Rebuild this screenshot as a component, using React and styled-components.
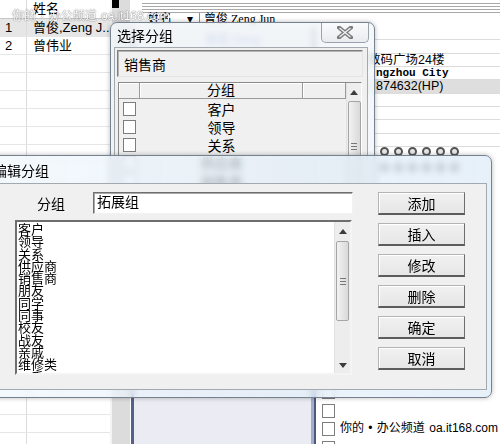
import React from 'react';
import styled, { createGlobalStyle } from 'styled-components';

const GlobalStyle = createGlobalStyle`
    html, body {
        margin: 0;
        padding: 0;
        background: #fff;
    }
    body {
        font-family: "Liberation Sans", "Noto Sans CJK SC", sans-serif;
        font-size: 13px;
        color: #000;
    }
`;

const Desktop = styled.div`
    position: relative;
    width: 500px;
    height: 444px;
    overflow: hidden;
    background: #fff;
`;

/* ---------- background application ---------- */

const BackApp = styled.div`
    display: flex;
    height: 100%;
`;

const Sheet = styled.div`
    width: 110px;
    flex: none;
    display: flex;
    flex-direction: column;
    overflow: hidden;
`;

const SheetRow = styled.div`
    display: flex;
    flex: none;
    height: ${p => (p.$head ? 19 : 18)}px;
    box-sizing: border-box;
    border-bottom: 1px solid ${p => (p.$head ? '#c6c6c6' : '#e6e6e6')};
    background: ${p => (p.$selected ? '#e6e6e6' : '#fff')};
    font-size: 13px;
    line-height: 17px;
`;

const NumCell = styled.div`
    width: 27px;
    flex: none;
    box-sizing: border-box;
    padding-left: 5px;
    border-right: 1px solid #dcdcdc;
`;

const NameCell = styled.div`
    flex: 1;
    padding-left: 6px;
    white-space: nowrap;
    overflow: hidden;
`;

const Gutter = styled.div`
    width: 20px;
    flex: none;
    box-sizing: border-box;
    border-left: 2px solid #f4f4f4;
    background: #dcdcdc;
`;

const BlackTab = styled.div`
    width: 7px;
    height: 8px;
    background: #000;
`;

const Main = styled.div`
    flex: 1;
    display: flex;
    flex-direction: column;
    min-width: 0;
`;

const Stripes = styled.div`
    height: 13px;
    flex: none;
    margin-left: 12px;
    background: repeating-linear-gradient(
        to bottom,
        transparent 0 2px,
        #a8a8a8 2px 3px
    );
    background-size: 100% 12px;
    background-repeat: no-repeat;
    background-position: 0 1px;
`;

const FieldHeader = styled.div`
    height: 14px;
    flex: none;
    display: flex;
    align-items: flex-start;
    font-size: 12px;
    line-height: 12px;
    white-space: nowrap;
`;

const FieldLabel = styled.div`
    width: 70px;
    box-sizing: border-box;
    padding-left: 18px;
    display: flex;
    justify-content: space-between;
    padding-right: 6px;
    border-right: 1px solid #8a8a8a;
`;

const FieldValue = styled.div`
    padding-left: 4px;
    font-family: "Liberation Serif", "Noto Sans CJK SC", serif;
`;

const MainBody = styled.div`
    flex: 1;
    display: flex;
    min-height: 0;
`;

const Panel = styled.div`
    width: 185px;
    flex: none;
    margin-left: 1px;
    box-sizing: border-box;
    border-left: 3px solid #53628a;
    border-right: 2px solid #4d5a80;
    box-shadow: inset -3px 0 0 #a6acca;
    background: #ebebf3;
    padding: 3px 0 0 71px;
    color: #3d68c4;
    font-size: 12px;
`;

const CheckCol = styled.div`
    width: 24px;
    flex: none;
    padding-top: 355px;
`;

const CheckRow = styled.div`
    height: 18.7px;
    padding: 3px 0 0 6px;
    box-sizing: border-box;
`;

const Box = styled.div`
    width: 13px;
    height: 14px;
    box-sizing: border-box;
    border: 1px solid #7d7d7d;
    background: #fff;
`;

const Cards = styled.div`
    flex: 1;
    display: flex;
    flex-direction: column;
    overflow: hidden;
`;

const CardRow = styled.div`
    height: 13.35px;
    flex: none;
    box-sizing: border-box;
    border-bottom: 1px solid #dcdcdc;
    padding-left: ${p => p.$indent || 28}px;
    background: ${p => (p.$hl ? '#dedede' : '#fff')};
    font-family: ${p => (p.$mono ? '"Liberation Mono", monospace' : 'inherit')};
    font-weight: ${p => (p.$mono ? 'bold' : 'normal')};
    font-size: ${p => (p.$mono ? 11 : 12.5)}px;
    line-height: 13px;
    white-space: nowrap;
`;

const DotRow = styled.div`
    height: 16px;
    flex: none;
    display: flex;
    gap: 5px;
    padding: 0 0 0 40px;
`;

const Dot = styled.div`
    width: 9px;
    height: 9px;
    box-sizing: border-box;
    border-radius: 50%;
    border: 2px solid #555;
    background: #e8e8e8;
`;

const Watermark = styled.div`
    position: absolute;
    left: ${p => p.$x}px;
    top: ${p => p.$y}px;
    font-size: 12px;
    white-space: nowrap;
    color: ${p => (p.$light ? '#fff' : '#000')};
    text-shadow: ${p =>
        p.$light ? '0 0 1px rgba(0,0,0,0.6), 0 0 2px rgba(0,0,0,0.3)' : 'none'};
    word-spacing: 1px;
    z-index: 5;
`;

/* ---------- window chrome ---------- */

const Window = styled.div`
    position: absolute;
    left: ${p => p.$x}px;
    top: ${p => p.$y}px;
    width: ${p => p.$w}px;
    height: ${p => p.$h}px;
    box-sizing: border-box;
    display: flex;
    flex-direction: column;
    border: 1px solid #76828f;
    border-radius: ${p => (p.$round ? '7px' : '7px 7px 0 0')};
    background: ${p => p.$glass};
    backdrop-filter: blur(3px);
    box-shadow: 0 0 5px rgba(0, 0, 0, 0.28);
    z-index: ${p => p.$z};
`;

const TitleBar = styled.div`
    height: ${p => p.$h}px;
    flex: none;
    display: flex;
    align-items: center;
    justify-content: space-between;
    padding-left: ${p => p.$pad}px;
    font-size: 14px;
    white-space: nowrap;
`;

const CloseButton = styled.div`
    align-self: flex-start;
    width: 48px;
    height: 20px;
    margin-right: 5px;
    box-sizing: border-box;
    border: 1px solid #9aa3ab;
    border-top: none;
    border-radius: 0 0 5px 5px;
    background: linear-gradient(#fafbfc, #e9ecef);
    display: flex;
    align-items: center;
    justify-content: center;
`;

const Client = styled.div`
    flex: 1;
    min-height: 0;
    margin: ${p => p.$m};
    box-sizing: border-box;
    border: 1px solid #a3a9b0;
    background: #f0f0f0;
    padding: ${p => p.$p};
    display: flex;
    flex-direction: ${p => (p.$row ? 'row' : 'column')};
`;

/* ---------- choose-group dialog ---------- */

const GrayInput = styled.div`
    height: 27px;
    flex: none;
    box-sizing: border-box;
    border: 1px solid;
    border-color: #7e7e7e #e4e4e4 #e4e4e4 #7e7e7e;
    box-shadow: inset 1px 1px 0 #b4b4b4;
    display: flex;
    align-items: center;
    padding-left: 6px;
    font-size: 14px;
`;

const Grid = styled.div`
    margin: 5px 1px 0 1px;
    flex: 1;
    display: flex;
    box-sizing: border-box;
    border: 1px solid;
    border-color: #8a8a8a #fff #fff #8a8a8a;
    overflow: hidden;
`;

const GridMain = styled.div`
    flex: 1;
    display: flex;
    flex-direction: column;
`;

const GridHead = styled.div`
    display: flex;
    height: 16px;
    flex: none;
`;

const HeadCell = styled.div`
    width: ${p => (p.$w ? `${p.$w}px` : 'auto')};
    flex: ${p => (p.$w ? 'none' : 1)};
    box-sizing: border-box;
    border-right: 1px solid #9a9a9a;
    border-bottom: 1px solid #9a9a9a;
    box-shadow: inset 1px 1px 0 #fff;
    text-align: center;
    font-size: 14px;
    line-height: 15px;
`;

const GridRow = styled.div`
    display: flex;
    height: 18px;
    flex: none;
    align-items: center;
    margin-top: ${p => (p.$first ? 1 : 0)}px;
`;

const ChkCell = styled.div`
    width: 21px;
    flex: none;
    padding-left: 4px;
    box-sizing: border-box;
`;

const TextCell = styled.div`
    width: 163px;
    text-align: center;
    font-size: 14px;
`;

/* ---------- scrollbars ---------- */

const VScroll = styled.div`
    width: ${p => p.$w}px;
    flex: none;
    box-sizing: border-box;
    background: #ededed;
    border-left: 1px solid #e2e2e2;
    display: flex;
    flex-direction: column;
    align-items: center;
`;

const Arrow = styled.div`
    height: ${p => p.$h}px;
    flex: none;
    display: flex;
    align-items: center;
    justify-content: center;
`;

const Thumb = styled.div`
    width: 13px;
    height: ${p => p.$h}px;
    flex: none;
    box-sizing: border-box;
    border: 1px solid #a5a5a5;
    border-radius: 2px;
    background: linear-gradient(to right, #f2f2f2, #d9d9d9);
    display: flex;
    align-items: center;
    justify-content: center;
`;

const Grip = styled.div`
    width: 6px;
    height: 7px;
    background: repeating-linear-gradient(to bottom, #777 0 1px, transparent 1px 3px);
`;

const Spacer = styled.div`
    flex: 1;
`;

/* ---------- edit-group dialog ---------- */

const LeftPane = styled.div`
    width: 338px;
    flex: none;
    display: flex;
    flex-direction: column;
`;

const FieldRow = styled.div`
    display: flex;
    align-items: center;
    height: 22px;
    flex: none;
`;

const Label = styled.div`
    width: 78px;
    box-sizing: border-box;
    padding-left: 22px;
    font-size: 14px;
`;

const WhiteInput = styled.div`
    width: 260px;
    height: 22px;
    box-sizing: border-box;
    border: 1px solid;
    border-color: #6f6f6f #f2f2f2 #f2f2f2 #6f6f6f;
    box-shadow: inset 1px 1px 0 #a8a8a8;
    background: #fff;
    padding-left: 3px;
    font-size: 14px;
    line-height: 19px;
`;

const ListBox = styled.div`
    margin-top: 6px;
    width: 337px;
    height: 155px;
    flex: none;
    box-sizing: border-box;
    border: 2px solid;
    border-color: #6e6e6e #f4f4f4 #f4f4f4 #6e6e6e;
    background: #fff;
    display: flex;
`;

const Items = styled.div`
    flex: 1;
    overflow: hidden;
    padding: 1px 0 0 1px;
    font-family: "Noto Sans CJK SC", sans-serif;
    font-size: 13px;
    line-height: 12.3px;
`;

const ButtonCol = styled.div`
    margin-left: 25px;
    width: 87px;
    display: flex;
    flex-direction: column;
    gap: 8px;
`;

const Button = styled.div`
    height: 23px;
    box-sizing: border-box;
    border: 1px solid;
    border-color: #b4b4b4 #6e6e6e #5c5c5c #b4b4b4;
    border-bottom-width: 2px;
    box-shadow: inset 1px 1px 0 #fff;
    background: linear-gradient(#f1f1f1, #e6e6e6);
    display: flex;
    align-items: center;
    justify-content: center;
    font-size: 14px;
`;

const UpArrow = () => (
    <svg width="8" height="5" viewBox="0 0 8 5">
        <path d="M0 5 L4 0 L8 5 Z" fill="#3c3c3c" />
    </svg>
);

const DownArrow = () => (
    <svg width="8" height="5" viewBox="0 0 8 5">
        <path d="M0 0 L8 0 L4 5 Z" fill="#3c3c3c" />
    </svg>
);

const CloseGlyph = () => (
    <svg width="16" height="13" viewBox="0 0 16 13">
        <path d="M2 1.5 L14 11.5 M14 1.5 L2 11.5" stroke="#7a7a7a" strokeWidth="4" strokeLinecap="square" />
        <path d="M2.5 2 L13.5 11 M13.5 2 L2.5 11" stroke="#f2f2f2" strokeWidth="1.3" />
    </svg>
);

const names = [
    { no: 1, name: '曾俊,Zeng J...', selected: true },
    { no: 2, name: '曾伟业' }
];

const groupRows = ['客户', '领导', '关系', '供应商', '销售商', '朋友'];

const listItems = [
    '客户', '领导', '关系', '供应商', '销售商', '朋友', '同学',
    '同事', '校友', '战友', '亲戚', '维修类', '二手', '其他'
];

const buttons = ['添加', '插入', '修改', '删除', '确定', '取消'];

const App = () => {
    const sheetRows = Array.from({ length: 24 }, (_, i) => names[i] || {});
    const checks = Array.from({ length: 4 });

    return (
        <Desktop>
            <GlobalStyle />
            <BackApp>
                <Sheet>
                    <SheetRow $head>
                        <NumCell />
                        <NameCell>姓名</NameCell>
                    </SheetRow>
                    {sheetRows.map((r, i) => (
                        <SheetRow key={i} $selected={r.selected}>
                            <NumCell>{r.no}</NumCell>
                            <NameCell>{r.name}</NameCell>
                        </SheetRow>
                    ))}
                </Sheet>
                <Gutter>
                    <BlackTab />
                </Gutter>
                <Main>
                    <Stripes />
                    <FieldHeader>
                        <FieldLabel>
                            <span>姓名</span>
                            <span>▾</span>
                        </FieldLabel>
                        <FieldValue>曾俊 Zeng Jun</FieldValue>
                    </FieldHeader>
                    <MainBody>
                        <Panel>曾俊 Zeng</Panel>
                        <CheckCol>
                            {checks.map((_, i) => (
                                <CheckRow key={i}>
                                    <Box />
                                </CheckRow>
                            ))}
                        </CheckCol>
                        <Cards>
                            <CardRow />
                            <CardRow />
                            <CardRow>数码广场24楼</CardRow>
                            <CardRow $mono $indent={36}>ngzhou City</CardRow>
                            <CardRow $hl $indent={36}>874632(HP)</CardRow>
                            <CardRow />
                            <CardRow />
                            <CardRow />
                            <CardRow />
                            <DotRow>
                                {Array.from({ length: 6 }).map((_, i) => <Dot key={i} />)}
                            </DotRow>
                            <DotRow>
                                {Array.from({ length: 6 }).map((_, i) => <Dot key={i} />)}
                            </DotRow>
                        </Cards>
                    </MainBody>
                </Main>
            </BackApp>

            <Watermark $x={12} $y={6} $light>你的 · 办公频道 oa.it168.com</Watermark>

            <Window $x={110} $y={22} $w={265} $h={230} $z={2} $glass="rgba(243, 246, 249, 0.82)">
                <TitleBar $h={24} $pad={6}>
                    <span>选择分组</span>
                    <CloseButton>
                        <CloseGlyph />
                    </CloseButton>
                </TitleBar>
                <Client $m="0 6px 0 3px" $p="2px 4px 0 2px">
                    <GrayInput>销售商</GrayInput>
                    <Grid>
                        <GridMain>
                            <GridHead>
                                <HeadCell $w={21} />
                                <HeadCell $w={163}>分组</HeadCell>
                                <HeadCell />
                            </GridHead>
                            {groupRows.map((g, i) => (
                                <GridRow key={g} $first={i === 0}>
                                    <ChkCell>
                                        <Box />
                                    </ChkCell>
                                    <TextCell>{g}</TextCell>
                                </GridRow>
                            ))}
                        </GridMain>
                        <VScroll $w={15}>
                            <Arrow $h={18}>
                                <UpArrow />
                            </Arrow>
                            <Thumb $h={90}>
                                <Grip />
                            </Thumb>
                        </VScroll>
                    </Grid>
                </Client>
            </Window>

            <Window
                $x={-12}
                $y={155}
                $w={504}
                $h={243}
                $z={3}
                $round
                $glass="linear-gradient(to right, rgba(240, 247, 252, 0.72), rgba(218, 233, 247, 0.66))"
            >
                <TitleBar $h={27} $pad={4}>
                    <span>编辑分组</span>
                </TitleBar>
                <Client $m="0 4px 7px 7px" $p="8px 21px 14px 18px" $row>
                    <LeftPane>
                        <FieldRow>
                            <Label>分组</Label>
                            <WhiteInput>拓展组</WhiteInput>
                        </FieldRow>
                        <ListBox>
                            <Items>
                                {listItems.map(t => (
                                    <div key={t}>{t}</div>
                                ))}
                            </Items>
                            <VScroll $w={16}>
                                <Arrow $h={19}>
                                    <UpArrow />
                                </Arrow>
                                <Thumb $h={80}>
                                    <Grip />
                                </Thumb>
                                <Spacer />
                                <Arrow $h={16}>
                                    <DownArrow />
                                </Arrow>
                            </VScroll>
                        </ListBox>
                    </LeftPane>
                    <ButtonCol>
                        {buttons.map(b => (
                            <Button key={b}>{b}</Button>
                        ))}
                    </ButtonCol>
                </Client>
            </Window>

            <Watermark $x={340} $y={418}>你的 • 办公频道 oa.it168.com</Watermark>
        </Desktop>
    );
};

export default App;
